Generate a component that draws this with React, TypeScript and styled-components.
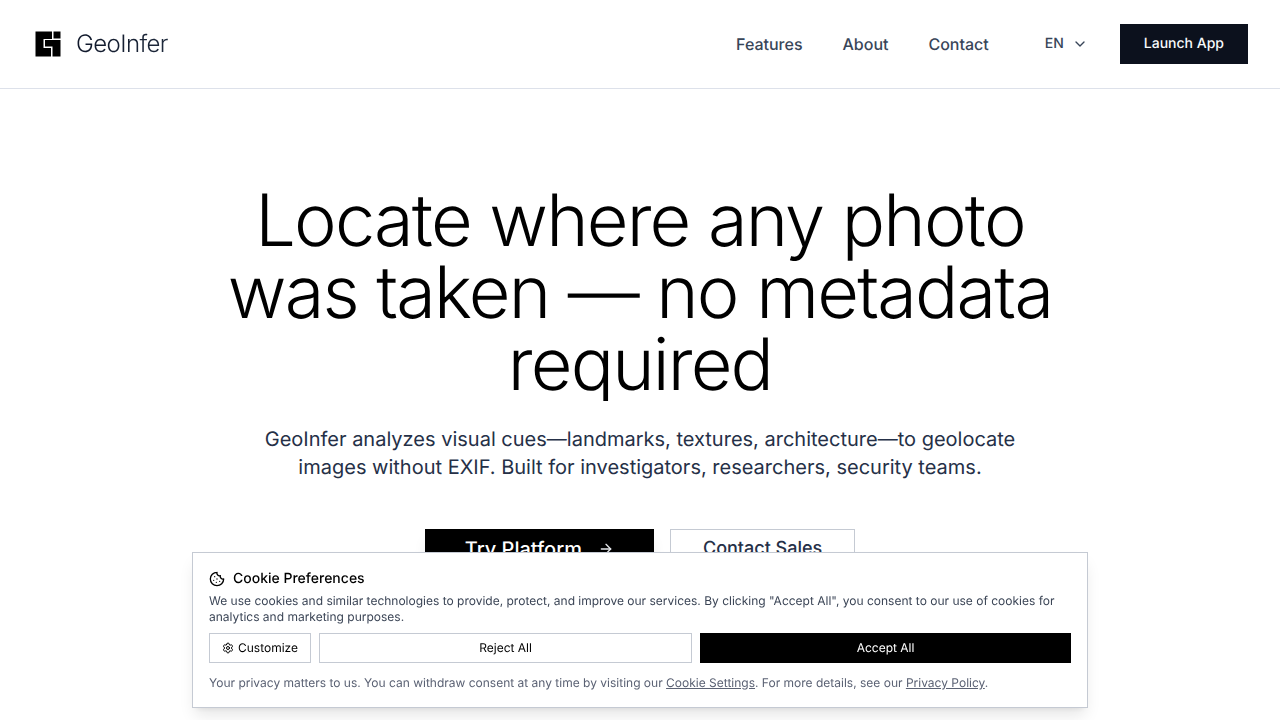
import React from "react";
import styled, { createGlobalStyle } from "styled-components";
import { ArrowRight, ChevronDown, Cookie, Settings } from "lucide-react";

const GlobalStyle = createGlobalStyle`
  *, *::before, *::after { box-sizing: border-box; }
  body {
    margin: 0;
    background: #ffffff;
    color: #000000;
    font-family: Inter, "Liberation Sans", sans-serif;
    font-size: 16px;
    line-height: 24px;
    -webkit-font-smoothing: antialiased;
    text-rendering: geometricPrecision;
  }
  h1, h2, p { margin: 0; }
  a { color: inherit; text-decoration: none; }
  button { font: inherit; text-rendering: inherit; cursor: pointer; margin: 0; border-radius: 0; }
`;

const Header = styled.header`
  display: flex;
  align-items: center;
  justify-content: space-between;
  padding: 24px 32px;
  border-bottom: 1px solid #dde1ea;
`;

const Brand = styled.a`
  display: flex;
  align-items: center;
  gap: 12px;
  font-size: 24px;
  font-weight: 300;
  line-height: 32px;
  letter-spacing: -0.025em;
`;

const BrandName = styled.span`
  background: linear-gradient(90deg, #0f172a, #1e293b);
  background-clip: text;
  -webkit-background-clip: text;
  color: transparent;
`;

const HeaderSide = styled.div`
  display: flex;
  align-items: center;
  gap: 32px;
`;

const Nav = styled.nav`
  display: flex;
  gap: 40px;
  margin-right: 8px;
`;

const NavLink = styled.a`
  color: #384558;
  font-weight: 500;
`;

const LanguageButton = styled.button`
  display: flex;
  align-items: center;
  gap: 8px;
  padding: 8px 0;
  padding-left: 16px;
  border: 0;
  background: none;
  color: #384558;
  font-size: 14px;
  font-weight: 500;
  line-height: 20px;
`;

const LaunchButton = styled.button`
  height: 40px;
  padding: 0 24px;
  border: 0;
  background: #0c111d;
  color: #f8fafc;
  font-size: 14px;
  font-weight: 500;
  line-height: 20px;
`;

const Hero = styled.main`
  max-width: 896px;
  margin: 0 auto;
  padding: 96px 24px;
  text-align: center;
`;

const Title = styled.h1`
  background: #000000;
  background-clip: text;
  -webkit-background-clip: text;
  color: transparent;
  font-size: 72px;
  font-weight: 300;
  line-height: 72px;
  letter-spacing: -0.025em;
`;

const Lead = styled.p`
  max-width: 768px;
  margin: 24px auto 48px;
  color: #253047;
  font-size: 20px;
  line-height: 28px;
`;

const Actions = styled.div`
  display: flex;
  justify-content: center;
  gap: 16px;
`;

const ActionButton = styled.button<{ $primary?: boolean }>`
  display: flex;
  align-items: center;
  gap: 16px;
  height: 40px;
  padding: ${(p) => (p.$primary ? "0 40px" : "0 32px")};
  border: ${(p) => (p.$primary ? "0" : "1px solid #c5cad3")};
  background: ${(p) => (p.$primary ? "#000000" : "#ffffff")};
  color: ${(p) => (p.$primary ? "#ffffff" : "#253047")};
  box-shadow: ${(p) => (p.$primary ? "0 10px 15px -3px rgba(0, 0, 0, 0.1)" : "none")};
  font-size: ${(p) => (p.$primary ? "20px" : "18px")};
  font-weight: 500;
  line-height: 28px;
`;

const ConsentLayer = styled.div`
  position: fixed;
  left: 0;
  right: 0;
  bottom: 12px;
  display: flex;
  justify-content: center;
`;

const Consent = styled.section`
  width: 70%;
  padding: 16px;
  border: 1px solid #c5cad3;
  background: #ffffff;
  box-shadow: 0 10px 15px -3px rgba(0, 0, 0, 0.1), 0 4px 6px -4px rgba(0, 0, 0, 0.1);
  color: #3b4556;
  font-size: 12px;
  line-height: 16px;
`;

const ConsentTitle = styled.h2`
  display: flex;
  align-items: center;
  gap: 8px;
  margin-bottom: 4px;
  color: #000000;
  font-size: 14px;
  font-weight: 500;
  line-height: 20px;
`;

const ConsentActions = styled.div`
  display: flex;
  gap: 8px;
  margin: 8px 0 12px;
`;

const ConsentButton = styled.button<{ $grow?: boolean; $primary?: boolean }>`
  display: flex;
  flex: ${(p) => (p.$grow ? "1 1 0" : "none")};
  align-items: center;
  justify-content: center;
  gap: 4px;
  height: 30px;
  padding: 0 12px;
  border: ${(p) => (p.$primary ? "0" : "1px solid #c5cad3")};
  background: ${(p) => (p.$primary ? "#000000" : "#ffffff")};
  color: ${(p) => (p.$primary ? "#ffffff" : "#000000")};
`;

const ConsentNote = styled.p`
  color: #5b6274;

  a { text-decoration: underline; }
`;

function Logo() {
  return (
    <svg width="32" height="32" viewBox="0 0 32 32" aria-hidden="true">
      <path d="M3.5 3.5H20V11H11.5V20H19V28.5H3.5Z" />
      <path d="M21.5 3.5H28.5V10.5H21.5Z" />
      <path d="M13 12H28.5V28.5H20.5V18.5H13Z" />
    </svg>
  );
}

export default function App() {
  return (
    <>
      <GlobalStyle />
      <Header>
        <Brand href="#">
          <Logo />
          <BrandName>GeoInfer</BrandName>
        </Brand>
        <HeaderSide>
          <Nav>
            <NavLink href="#features">Features</NavLink>
            <NavLink href="#about">About</NavLink>
            <NavLink href="#contact">Contact</NavLink>
          </Nav>
          <LanguageButton type="button" aria-haspopup="listbox">
            EN
            <ChevronDown size={16} />
          </LanguageButton>
          <LaunchButton type="button">Launch App</LaunchButton>
        </HeaderSide>
      </Header>
      <Hero>
        <Title>Locate where any photo was taken — no metadata required</Title>
        <Lead>
          GeoInfer analyzes visual cues—landmarks, textures, architecture—to geolocate images
          without EXIF. Built for investigators, researchers, security teams.
        </Lead>
        <Actions>
          <ActionButton type="button" $primary>
            Try Platform
            <ArrowRight size={16} color="#e5e7eb" />
          </ActionButton>
          <ActionButton type="button">Contact Sales</ActionButton>
        </Actions>
      </Hero>
      <ConsentLayer>
        <Consent aria-labelledby="consent-title">
          <ConsentTitle id="consent-title">
            <Cookie size={16} />
            Cookie Preferences
          </ConsentTitle>
          <p>
            We use cookies and similar technologies to provide, protect, and improve our services.
            By clicking "Accept All", you consent to our use of cookies for analytics and marketing
            purposes.
          </p>
          <ConsentActions>
            <ConsentButton type="button">
              <Settings size={12} />
              Customize
            </ConsentButton>
            <ConsentButton type="button" $grow>Reject All</ConsentButton>
            <ConsentButton type="button" $grow $primary>Accept All</ConsentButton>
          </ConsentActions>
          <ConsentNote>
            Your privacy matters to us. You can withdraw consent at any time by visiting our{" "}
            <a href="#cookies">Cookie Settings</a>. For more details, see our{" "}
            <a href="#privacy">Privacy Policy</a>.
          </ConsentNote>
        </Consent>
      </ConsentLayer>
    </>
  );
}
